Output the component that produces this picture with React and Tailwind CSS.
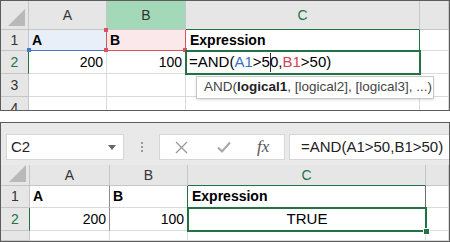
import React from 'react'

const font = "font-['Liberation_Sans',Arial,sans-serif]"
const hdr = 'bg-[#e6e6e6] border-r border-b border-[#c6c6c6] flex items-center justify-center text-[14px] text-[#333]'
const cell = 'border-r border-b border-[#dadada]'

function Corner() {
  return (
    <div className="bg-[#e6e6e6] border-r border-b border-[#c6c6c6] relative">
      <svg className="absolute right-[3px] bottom-[3px]" width="17" height="17" viewBox="0 0 17 17">
        <polygon points="17,0 17,17 0,17" fill="#b9b9b9" />
      </svg>
    </div>
  )
}

function Dot({ className }) {
  return <span className={'absolute w-[4px] h-[4px] ' + className} />
}

function TopPanel() {
  return (
    <div className="relative h-[111px] border border-[#5c5c5c] overflow-hidden bg-white">
      <div className="grid grid-cols-[28px_78px_79px_234px_1fr] grid-rows-[29px_21px_23px_23px_23px]">
        <Corner />
        <div className={hdr}>A</div>
        <div className="bg-[#a3d8b9] border-r border-b border-[#c6c6c6] flex items-center justify-center text-[14px] text-[#333]">B</div>
        <div className="bg-[#e6e6e6] border-r border-b border-b-[#217346] border-[#c6c6c6] flex items-center justify-center text-[14px] text-[#217346]">C</div>
        <div className={hdr}></div>

        {/* row 1 */}
        <div className={hdr}>1</div>
        <div className="relative bg-[#e8eff9] border-r border-r-[#d9545f] border-b border-b-[#4a78c8] flex items-center pl-[3px] text-[14px] font-bold text-black">
          A
          <Dot className="-left-[2px] -bottom-[2px] bg-[#4a78c8]" />
        </div>
        <div className="relative bg-[#fbe8ea] border-r border-b border-[#d9545f] flex items-center pl-[3px] text-[14px] font-bold text-black">
          B
          <Dot className="-left-[3px] -bottom-[2px] bg-[#d9545f]" />
          <Dot className="-right-[2px] -bottom-[2px] bg-[#d9545f]" />
          <Dot className="-left-[3px] -top-[2px] bg-[#d9545f]" />
        </div>
        <div className="border-r border-r-[#217346] border-b border-[#dadada] flex items-center pl-[4px] text-[14px] font-bold text-black">Expression</div>
        <div className={cell}></div>

        {/* row 2 */}
        <div className="bg-[#e6e6e6] border-r border-r-[#217346] border-b border-[#c6c6c6] flex items-center justify-center text-[14px] text-[#217346]">2</div>
        <div className={cell + ' flex items-center justify-end pr-[3px] text-[14px] text-black'}>200</div>
        <div className={cell + ' flex items-center justify-end pr-[3px] text-[14px] text-black'}>100</div>
        <div className="relative flex items-center pl-[3px] text-[15px] text-black whitespace-nowrap">
          <div className="absolute -left-px -top-px -right-px -bottom-px border-2 border-[#217346]" />
          <span>=AND(</span>
          <span className="text-[#3a6fc4]">A1</span>
          <span>&gt;5</span>
          <span className="inline-block w-px h-[19px] bg-[#333] -mr-px" />
          <span>0,</span>
          <span className="text-[#d24450]">B1</span>
          <span>&gt;50)</span>
        </div>
        <div className={cell}></div>

        {/* row 3 */}
        <div className={hdr}>3</div>
        <div className={cell}></div>
        <div className={cell}></div>
        <div className={cell}></div>
        <div className={cell}></div>

        {/* row 4 */}
        <div className={hdr}>4</div>
        <div className={cell}></div>
        <div className={cell}></div>
        <div className={cell}></div>
        <div className={cell}></div>
      </div>

      <div className="absolute left-[195px] top-[75px] w-[238px] h-[23px] border border-[#c8c8c8] bg-white shadow-sm flex items-center pl-[7px] text-[13.5px] text-[#444] whitespace-nowrap">
        AND(<b className="text-[#222]">logical1</b>, [logical2], [logical3], ...)
      </div>
    </div>
  )
}

function BottomPanel() {
  return (
    <div className="h-[120px] border border-[#5c5c5c] overflow-hidden bg-[#e9e9e9] flex flex-col">
      <div className="h-[48px] flex items-start pt-[11px] pl-[5px]">
        <div className="w-[118px] h-[26px] bg-white border border-[#d6d6d6] flex items-center justify-between pl-[4px] pr-[7px] text-[15px] text-[#222]">
          C2
          <svg width="8" height="5" viewBox="0 0 8 5"><polygon points="0,0 8,0 4,5" fill="#666" /></svg>
        </div>
        <div className="w-[35px] h-[26px] flex flex-col items-center justify-center gap-[2px]">
          <span className="w-[2px] h-[2px] bg-[#9a9a9a]" />
          <span className="w-[2px] h-[2px] bg-[#9a9a9a]" />
          <span className="w-[2px] h-[2px] bg-[#9a9a9a]" />
        </div>
        <div className="w-[126px] h-[26px] bg-white border border-[#d6d6d6] flex items-center">
          <svg className="ml-[15px]" width="13" height="13" viewBox="0 0 13 13">
            <path d="M1 1 L12 12 M12 1 L1 12" stroke="#9a9a9a" strokeWidth="1.3" fill="none" />
          </svg>
          <svg className="ml-[29px]" width="14" height="12" viewBox="0 0 14 12">
            <path d="M1 6.5 L5 10.5 L13 1.5" stroke="#a8a8a8" strokeWidth="2" fill="none" />
          </svg>
          <span className="ml-[26px] text-[17px] italic text-[#555] font-['Liberation_Serif',serif]">fx</span>
        </div>
        <div className="flex-1 h-[26px] ml-[4px] bg-white border border-r-0 border-[#d6d6d6] flex items-center pl-[11px] text-[15px] text-[#222] whitespace-nowrap">
          =AND(A1&gt;50,B1&gt;50)
        </div>
      </div>

      <div className="grid grid-cols-[29px_80px_78px_238px_1fr] grid-rows-[21px_22px_23px_10px] bg-white">
        <Corner />
        <div className={hdr}>A</div>
        <div className={hdr}>B</div>
        <div className="bg-[#e6e6e6] border-r border-b border-b-[#217346] border-[#c6c6c6] flex items-center justify-center text-[14px] text-[#217346]">C</div>
        <div className={hdr}></div>

        <div className={hdr}>1</div>
        <div className="border-r border-r-[#8c8c8c] border-b border-[#dadada] flex items-center pl-[3px] text-[14px] font-bold text-black">A</div>
        <div className="border-r border-r-[#217346] border-b border-[#dadada] flex items-center pl-[3px] text-[14px] font-bold text-black">B</div>
        <div className="border-r border-r-[#6e6e6e] border-b border-[#dadada] flex items-center pl-[4px] text-[14px] font-bold text-black">Expression</div>
        <div className={cell}></div>

        <div className="bg-[#e6e6e6] border-r border-r-[#217346] border-b border-[#c6c6c6] flex items-center justify-center text-[14px] text-[#217346]">2</div>
        <div className="border-r border-r-[#8c8c8c] border-b border-[#dadada] flex items-center justify-end pr-[3px] text-[14px] text-black">200</div>
        <div className={cell + ' flex items-center justify-end pr-[3px] text-[14px] text-black'}>100</div>
        <div className="relative flex items-center justify-center text-[15px] text-black">
          <div className="absolute -left-px -top-px -right-px -bottom-px border-2 border-[#217346]" />
          TRUE
          <span className="absolute -right-[4px] -bottom-[4px] w-[7px] h-[7px] bg-[#217346] border border-white" />
        </div>
        <div className={cell}></div>

        <div className={hdr}></div>
        <div className={cell}></div>
        <div className={cell}></div>
        <div className={cell}></div>
        <div className={cell}></div>
      </div>
    </div>
  )
}

export default function App() {
  return (
    <div className={'w-[450px] h-[242px] bg-white flex flex-col gap-[11px] overflow-hidden ' + font}>
      <TopPanel />
      <BottomPanel />
    </div>
  )
}
